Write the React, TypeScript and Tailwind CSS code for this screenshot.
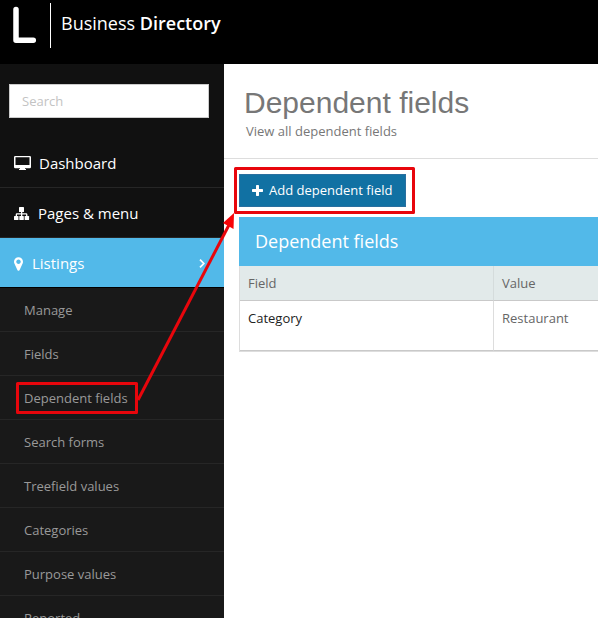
import type { ReactNode } from "react";

function DesktopIcon() {
  return (
    <svg viewBox="0 0 17 15" className="h-[15px] w-[17px] shrink-0" aria-hidden="true">
      <path
        fill="currentColor"
        fillRule="evenodd"
        d="M1.200 0h14.600q1.200 0 1.200 1.200v9.800q0 1.200-1.200 1.200H11v.8h1v1H5v-1h1v-.8H1.200Q0 12.200 0 11V1.200Q0 0 1.200 0zM1.500 1.300v7.700h14V1.300z"
      />
    </svg>
  );
}

function SitemapIcon() {
  return (
    <svg viewBox="0 0 16 16" className="h-4 w-4 shrink-0" aria-hidden="true">
      <g fill="currentColor">
        <rect x="5" y="1" width="5" height="5" rx="0.600" />
        <rect x="0" y="10" width="4.500" height="4" rx="0.600" />
        <rect x="5.300" y="10" width="4.500" height="4" rx="0.600" />
        <rect x="10.600" y="10" width="4.500" height="4" rx="0.600" />
        <path d="M7 5h1.300v2.200H12.200q1.200 0 1.200 1.200V10.500h-1.300V8.500H8.300V10.500H7V8.500H3V10.500H1.700V8.400q0-1.200 1.200-1.200H7z" />
      </g>
    </svg>
  );
}

function MarkerIcon() {
  return (
    <svg viewBox="384 128 1024 1536" className="h-[14px] w-[9px] shrink-0" aria-hidden="true">
      <path
        fill="currentColor"
        d="M1152 640q0-106-75-181t-181-75-181 75-75 181 75 181 181 75 181-75 75-181zm256 0q0 109-33 179l-364 774q-16 33-47.500 52t-67.500 19-67.500-19-46.500-52l-365-774q-33-70-33-179 0-212 150-362t362-150 362 150 150 362z"
      />
    </svg>
  );
}

function PlusIcon() {
  return (
    <svg viewBox="192 128 1408 1408" className="h-[11px] w-[11px] shrink-0" aria-hidden="true">
      <path
        fill="currentColor"
        d="M1600 736v192q0 40-28 68t-68 28h-416v416q0 40-28 68t-68 28h-192q-40 0-68-28t-28-68v-416h-416q-40 0-68-28t-28-68v-192q0-40 28-68t68-28h416v-416q0-40 28-68t68-28h192q40 0 68 28t28 68v416h416q40 0 68 28t28 68z"
      />
    </svg>
  );
}

function ChevronIcon() {
  return (
    <svg viewBox="0 0 6 9" className="h-[9px] w-[6px] shrink-0" aria-hidden="true">
      <path d="M1 0.700 4.800 4.500 1 8.300" fill="none" stroke="currentColor" strokeWidth="1.700" />
    </svg>
  );
}

const subItems = [
  "Manage",
  "Fields",
  "Dependent fields",
  "Search forms",
  "Treefield values",
  "Categories",
  "Purpose values",
  "Reported",
];

function MenuLink({ icon, label }: { icon: ReactNode; label: string }) {
  return (
    <li className="border-b border-[#262626]">
      <a href="#" className="flex h-[49px] items-center gap-2 px-[14px] pt-[2px] text-[15px] text-white">
        {icon}
        {label}
      </a>
    </li>
  );
}

function Sidebar() {
  return (
    <aside className="w-56 shrink-0 bg-[#111111]">
      <form className="pt-5 pr-[15px] pb-5 pl-[9px]">
        <input
          type="search"
          aria-label="Search"
          placeholder="Search"
          className="block h-[34px] w-full border border-[#cccccc] bg-white px-3 text-[13px] text-[#555555] placeholder:text-[#c3c3c3]"
        />
      </form>
      <nav>
        <ul>
          <MenuLink icon={<DesktopIcon />} label="Dashboard" />
          <MenuLink icon={<SitemapIcon />} label="Pages & menu" />
          <li>
            <a
              href="#"
              className="flex h-[49px] items-center gap-[9px] bg-[#52b9e9] pt-[2px] pr-[19px] pl-[14px] text-[15px] text-white"
            >
              <MarkerIcon />
              <span className="grow">Listings</span>
              <ChevronIcon />
            </a>
            <ul className="border-t border-black bg-[#191919]">
              {subItems.map((item) => (
                <li key={item} className="border-b border-[#262626]">
                  <a href="#" className="flex h-[43px] items-center px-6 pt-[2px] text-[13px] text-[#999999]">
                    {item}
                  </a>
                </li>
              ))}
            </ul>
          </li>
        </ul>
      </nav>
    </aside>
  );
}

function Annotations() {
  return (
    <svg
      width="598"
      height="618"
      viewBox="0 0 598 618"
      className="pointer-events-none absolute top-0 left-0"
      aria-hidden="true"
    >
      <g fill="none" stroke="#e8060c" strokeWidth="3" strokeLinejoin="round">
        <rect x="17.500" y="383.500" width="119" height="29" />
        <rect x="235.500" y="168.500" width="178" height="44" />
        <path d="M138 400 230 223" />
      </g>
      <path d="M234 213 233.500 229 223 223z" fill="#f80408" />
    </svg>
  );
}

export default function App() {
  return (
    <div className="relative flex h-screen flex-col overflow-hidden bg-white font-['Open_Sans','Noto_Sans',sans-serif] text-[13px] text-[#666666]">
      <header className="flex h-16 shrink-0 items-start bg-black pt-[3px] pl-3 text-white">
        <svg viewBox="0 0 26 40" className="h-10 w-[26px]" role="img" aria-label="Logo">
          <path
            d="M4 6.500v30.700h17.300"
            fill="none"
            stroke="white"
            strokeWidth="5.500"
            strokeLinecap="round"
            strokeLinejoin="round"
          />
        </svg>
        <a href="#" className="ml-3 flex h-[45px] items-center border-l border-white pb-[6px] pl-[10px] text-lg">
          <span>
            Business <strong className="font-semibold">Directory</strong>
          </span>
        </a>
      </header>
      <div className="flex min-h-0 grow">
        <Sidebar />
        <main className="min-w-0 grow">
          <div className="h-[95px] border-b border-[#dddddd] px-5 pt-5">
            <h1 className="font-['Liberation_Sans',Arial,sans-serif] text-[30px] leading-[38px] text-[#777777]">
              Dependent fields
            </h1>
            <p className="pl-[2px] leading-[18px] text-[#777777]">View all dependent fields</p>
          </div>
          <div className="py-[15px] pl-[15px]">
            <button
              type="button"
              className="flex h-[33px] items-center gap-[6px] border border-[#2a6f9f] bg-[#1171a3] pr-[13px] pl-3 text-white"
            >
              <PlusIcon />
              Add dependent field
            </button>
            <section className="mt-[10px] border-b border-l border-[#dddddd]">
              <h2 className="-ml-px flex h-[49px] items-center bg-[#52b9e9] pb-[2px] pl-4 text-lg text-white">
                Dependent fields
              </h2>
              <table className="w-full table-fixed border-separate border-spacing-0 text-left">
                <thead className="bg-[#e2eaea]">
                  <tr className="h-[35px]">
                    <th className="w-[253px] border-b border-[#c9c9c9] px-2 pt-[2px] font-normal">Field</th>
                    <th className="border-b border-l border-b-[#c9c9c9] border-l-[#d5dcdc] px-2 pt-[2px] font-normal">
                      Value
                    </th>
                  </tr>
                </thead>
                <tbody>
                  <tr className="h-[50px]">
                    <td className="border-b border-[#c9c9c9] px-2 pt-2 align-top text-[#222222]">Category</td>
                    <td className="border-b border-l border-b-[#c9c9c9] border-l-[#dddddd] px-2 pt-2 align-top">
                      Restaurant
                    </td>
                  </tr>
                </tbody>
              </table>
            </section>
          </div>
        </main>
      </div>
      <Annotations />
    </div>
  );
}
